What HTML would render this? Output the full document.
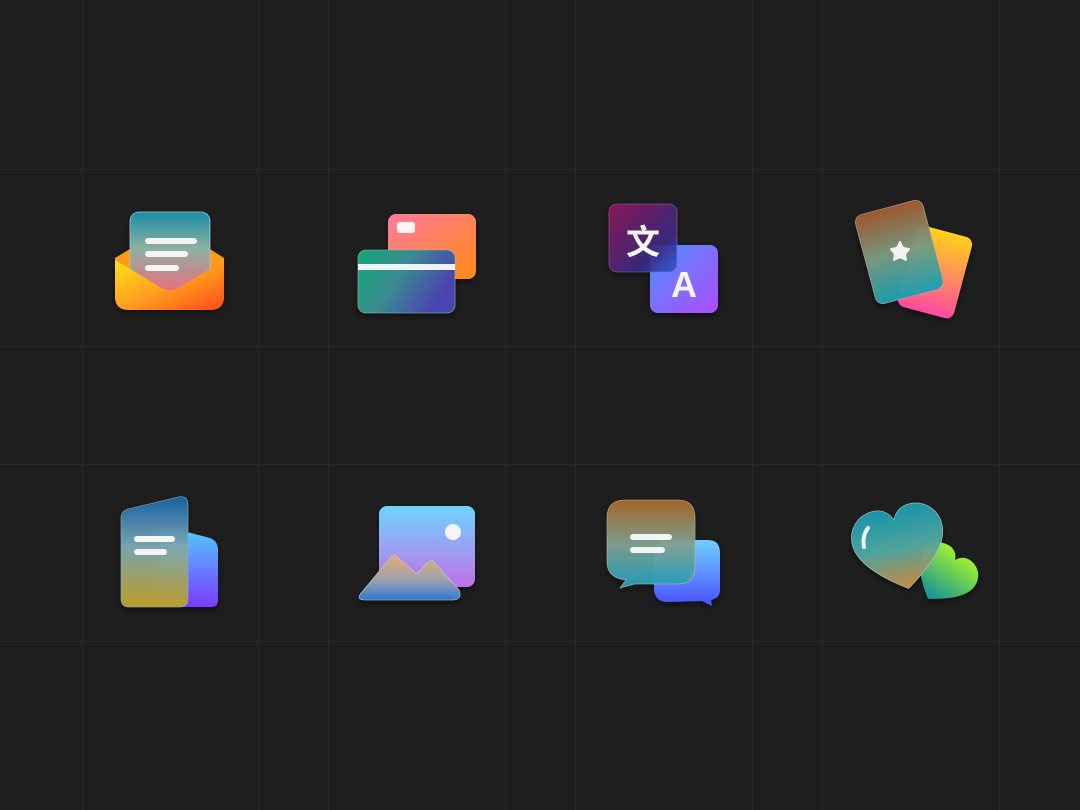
<!DOCTYPE html>
<html><head><meta charset="utf-8"><style>
html,body{margin:0;padding:0;background:#1e1e1e;}
svg{display:block}
</style></head><body>
<svg width="1080" height="810" viewBox="0 0 1080 810" xmlns="http://www.w3.org/2000/svg">
<defs>
<linearGradient id="paper1" x1="0" y1="0" x2="0" y2="1"><stop offset="0" stop-color="#1a8ea8"/><stop offset="0.45" stop-color="#8eb0a0"/><stop offset="1" stop-color="#f06a7e"/></linearGradient>
<linearGradient id="env" x1="0" y1="0" x2="1" y2="1"><stop offset="0" stop-color="#ffe01a"/><stop offset="0.5" stop-color="#ffa020"/><stop offset="1" stop-color="#ff4a1a"/></linearGradient>
<linearGradient id="cardB" x1="0" y1="0" x2="1" y2="1"><stop offset="0" stop-color="#ff7a9e"/><stop offset="1" stop-color="#ff8a14"/></linearGradient>
<linearGradient id="cardF" x1="0" y1="0" x2="1" y2="0.4"><stop offset="0" stop-color="#10a878"/><stop offset="0.5" stop-color="#3a8a90"/><stop offset="1" stop-color="#4a44b0"/></linearGradient>
<linearGradient id="trB" x1="0" y1="0" x2="1" y2="1"><stop offset="0" stop-color="#90185a"/><stop offset="0.7" stop-color="#3a2a80"/><stop offset="1" stop-color="#2a60e0"/></linearGradient>
<linearGradient id="trF" x1="0" y1="0" x2="1" y2="1"><stop offset="0" stop-color="#4a90ff"/><stop offset="1" stop-color="#b04cff"/></linearGradient>
<linearGradient id="pcB" x1="0" y1="0" x2="0" y2="1"><stop offset="0" stop-color="#ffd21a"/><stop offset="1" stop-color="#ff4aa0"/></linearGradient>
<linearGradient id="pcF" x1="0" y1="0" x2="0" y2="1"><stop offset="0" stop-color="#a05a30"/><stop offset="0.5" stop-color="#7a9a80"/><stop offset="1" stop-color="#1aa0b0"/></linearGradient>
<linearGradient id="docB" x1="0" y1="0" x2="0" y2="1"><stop offset="0" stop-color="#50d0ff"/><stop offset="1" stop-color="#7a3aff"/></linearGradient>
<linearGradient id="docF" x1="0" y1="0" x2="0" y2="1"><stop offset="0" stop-color="#1a62a8"/><stop offset="0.45" stop-color="#7aa8b0"/><stop offset="1" stop-color="#c0a028"/></linearGradient>
<linearGradient id="imgB" x1="0" y1="0" x2="0" y2="1"><stop offset="0" stop-color="#70d4ff"/><stop offset="1" stop-color="#c070e8"/></linearGradient>
<linearGradient id="mtn" x1="0" y1="0" x2="0" y2="1"><stop offset="0" stop-color="#e0b070"/><stop offset="0.55" stop-color="#a0a0b0"/><stop offset="1" stop-color="#2a7ad0"/></linearGradient>
<linearGradient id="chF" x1="0" y1="0" x2="0" y2="1"><stop offset="0" stop-color="#a8682a"/><stop offset="0.5" stop-color="#80a090"/><stop offset="1" stop-color="#20a0c0"/></linearGradient>
<linearGradient id="chB" x1="0" y1="0" x2="0" y2="1"><stop offset="0" stop-color="#70d0ff"/><stop offset="1" stop-color="#4a50ff"/></linearGradient>
<linearGradient id="hB" x1="0" y1="0" x2="0" y2="1"><stop offset="0" stop-color="#a0f030"/><stop offset="1" stop-color="#10909a"/></linearGradient>
<linearGradient id="hF" x1="0" y1="0" x2="0" y2="1"><stop offset="0" stop-color="#1a98b0"/><stop offset="0.5" stop-color="#50a8a0"/><stop offset="1" stop-color="#d08a40"/></linearGradient>
<filter id="sh" x="-30%" y="-30%" width="160%" height="160%"><feDropShadow dx="0" dy="3" stdDeviation="3" flood-color="#000" flood-opacity="0.45"/></filter>
</defs>
<g stroke="#272727" stroke-width="1">
<line x1="82.5" y1="0" x2="82.5" y2="810"/><line x1="258.5" y1="0" x2="258.5" y2="810"/>
<line x1="328.5" y1="0" x2="328.5" y2="810"/><line x1="505.5" y1="0" x2="505.5" y2="810"/>
<line x1="575.5" y1="0" x2="575.5" y2="810"/><line x1="752.5" y1="0" x2="752.5" y2="810"/>
<line x1="822.5" y1="0" x2="822.5" y2="810"/><line x1="999.5" y1="0" x2="999.5" y2="810"/>
<line x1="0" y1="169.5" x2="1080" y2="169.5"/><line x1="0" y1="346.5" x2="1080" y2="346.5"/>
<line x1="0" y1="464.5" x2="1080" y2="464.5"/><line x1="0" y1="641.5" x2="1080" y2="641.5"/>
</g>

<!-- envelope -->
<g filter="url(#sh)">
<path d="M115 258 L135 246 L205 246 L224 258 L224 296 Q224 310 210 310 L129 310 Q115 310 115 296 Z" fill="#ff9a18"/>
<rect x="130" y="212" width="80" height="82" rx="9" fill="url(#paper1)" stroke="#9ccad0" stroke-width="0.8"/>
<path d="M115 260 L160 287 Q170 293 180 287 L224 260 L224 296 Q224 310 210 310 L129 310 Q115 310 115 296 Z" fill="url(#env)"/>
</g>
<g stroke="#f4f4f4" stroke-width="6" stroke-linecap="round"><line x1="148" y1="241" x2="194" y2="241"/><line x1="148" y1="254" x2="185" y2="254"/><line x1="148" y1="268" x2="176" y2="268"/></g>

<!-- cards -->
<g filter="url(#sh)">
<rect x="388" y="214" width="88" height="65" rx="8" fill="url(#cardB)"/>
<rect x="397" y="222" width="18" height="11" rx="3" fill="#fff4f4"/>
<rect x="358" y="250" width="97" height="63" rx="8" fill="url(#cardF)" stroke="#8ac0b0" stroke-width="0.6"/>
<rect x="358" y="264" width="97" height="6" fill="#eef2f2"/>
</g>

<!-- translate -->
<g filter="url(#sh)">
<rect x="650" y="245" width="68" height="68" rx="8" fill="url(#trF)"/>
<rect x="609" y="204" width="68" height="68" rx="8" fill="url(#trB)" opacity="0.93" stroke="#9a6aa0" stroke-width="0.6"/>
</g>
<text x="643" y="254" font-family="'Liberation Sans','Noto Sans CJK SC',sans-serif" font-size="34" font-weight="bold" fill="#f4f4f4" text-anchor="middle">文</text>
<text x="684" y="297" font-family="'Liberation Sans',sans-serif" font-size="36" font-weight="bold" fill="#f4f4f4" text-anchor="middle">A</text>

<!-- playing cards -->
<g filter="url(#sh)">
<rect x="906" y="230" width="58" height="84" rx="8" fill="url(#pcB)" transform="rotate(15 935 272)"/>
<rect x="864" y="206" width="70" height="92" rx="8" fill="url(#pcF)" transform="rotate(-15 899 251)" stroke="#c0a890" stroke-width="0.6" opacity="0.97"/>
</g>
<path d="M900 242 L903 248 L909 249 L905 254 L906 260 L900 257 L894 260 L895 254 L891 249 L897 248 Z" fill="#f2f2f2" stroke="#f2f2f2" stroke-width="2" stroke-linejoin="round"/>

<!-- doc -->
<g filter="url(#sh)">
<path d="M160 525 L210 538 Q218 541 218 550 L218 600 Q218 607 211 607 L160 607 Z" fill="url(#docB)"/>
<path d="M121 518 Q121 511 128 509 L178 497 Q188 495 188 505 L188 599 Q188 607 180 607 L129 607 Q121 607 121 599 Z" fill="url(#docF)" opacity="0.97" stroke="#88b0c8" stroke-width="0.6"/>
</g>
<g stroke="#f4f4f4" stroke-width="6" stroke-linecap="round"><line x1="137" y1="539" x2="172" y2="539"/><line x1="137" y1="552" x2="164" y2="552"/></g>

<!-- image -->
<g filter="url(#sh)">
<rect x="379" y="506" width="96" height="81" rx="8" fill="url(#imgB)"/>
<circle cx="453" cy="532" r="8" fill="#f4f4fc"/>
<path d="M362 592 L391 557 Q394 553 397 557 L417 574 L428 562 Q431 559 434 562 L459 590 Q463 600 452 600 L365 600 Q355 600 362 592 Z" fill="url(#mtn)" stroke="#d0c8c0" stroke-width="0.6"/>
</g>

<!-- chat -->
<g filter="url(#sh)">
<path d="M668 540 L708 540 Q720 540 720 553 L720 590 Q720 598 711 600 L712 606 L702 601 L668 602 Q654 602 654 588 L654 554 Q654 540 668 540 Z" fill="url(#chB)"/>
<path d="M625 500 L678 500 Q695 500 695 518 L695 566 Q695 584 678 584 L635 584 L620 588 L626 580 Q607 578 607 562 L607 518 Q607 500 625 500 Z" fill="url(#chF)" opacity="0.96" stroke="#c8b8a0" stroke-width="0.6"/>
</g>
<g stroke="#f4f4f4" stroke-width="6" stroke-linecap="round"><line x1="633" y1="537" x2="669" y2="537"/><line x1="633" y1="550" x2="662" y2="550"/></g>

<!-- heart -->
<g filter="url(#sh)">
<g transform="translate(944 576) rotate(35) scale(0.62) translate(-50 -45)">
<path d="M50 90 C20 70 0 50 0 30 C0 12 14 0 30 0 C40 0 47 6 50 14 C53 6 60 0 70 0 C86 0 100 12 100 30 C100 50 80 70 50 90 Z" fill="url(#hB)"/>
</g>
<g transform="translate(900 548) rotate(-12) scale(0.92) translate(-50 -45)">
<path d="M50 90 C20 70 0 50 0 30 C0 12 14 0 30 0 C40 0 47 6 50 14 C53 6 60 0 70 0 C86 0 100 12 100 30 C100 50 80 70 50 90 Z" fill="url(#hF)" opacity="0.96" stroke="#9cc8c8" stroke-width="0.7"/>
</g>
</g>
<path d="M868 528 Q862 536 864 547" stroke="#e8f4f4" stroke-width="4" fill="none" stroke-linecap="round"/>
</svg>
</body></html>
